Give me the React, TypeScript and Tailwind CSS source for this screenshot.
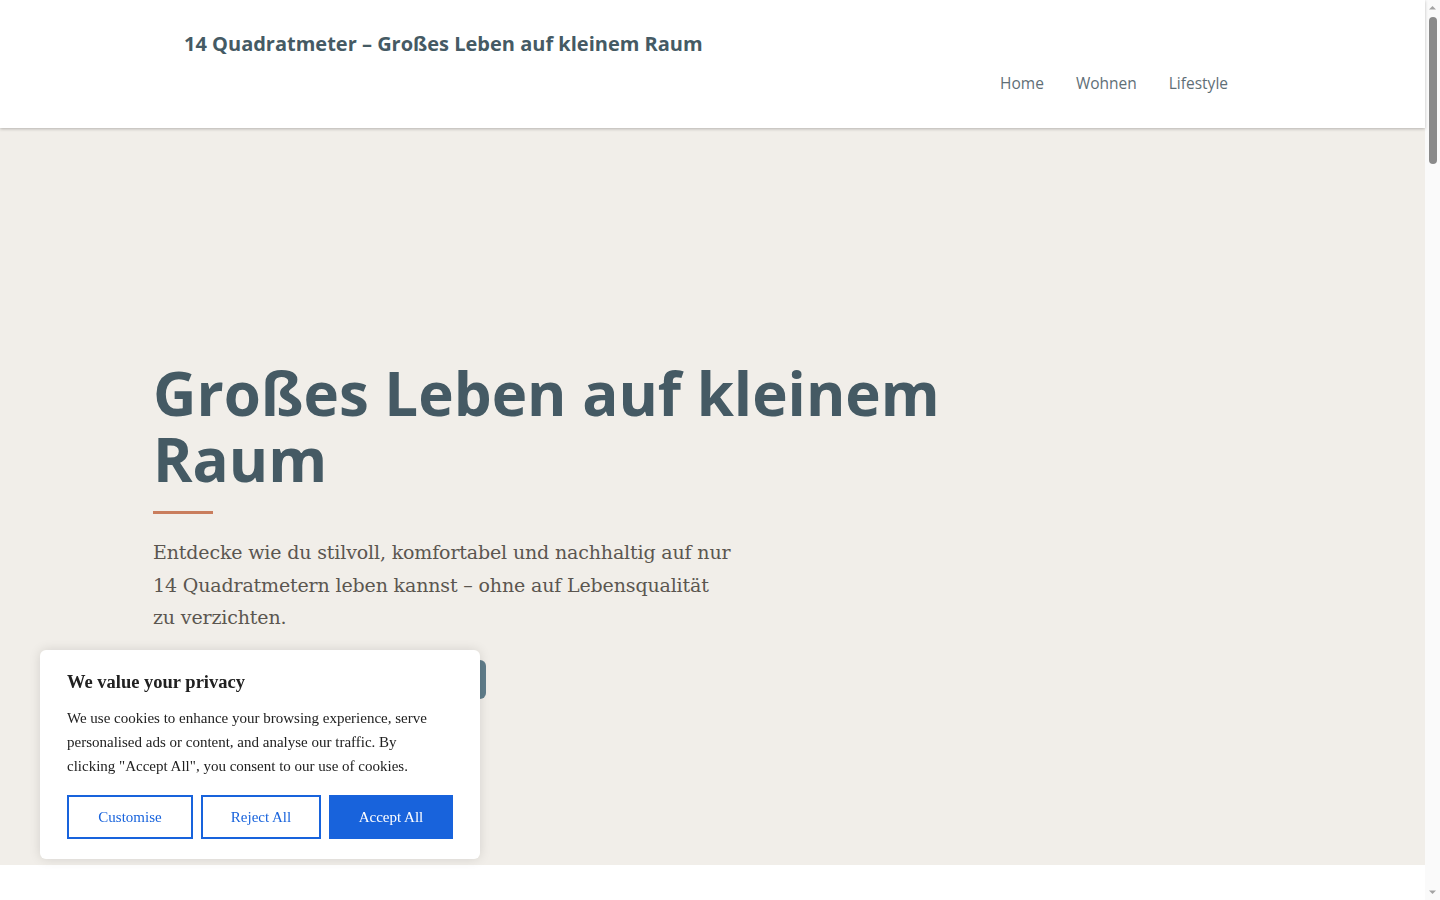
import { useState } from 'react'

const sans = '[font-family:"Open_Sans","Noto_Sans",sans-serif]'
const serif = '[font-family:"DejaVu_Serif","Liberation_Serif",serif]'
const bannerSerif = '[font-family:"Liberation_Serif","DejaVu_Serif",serif]'

function Header() {
  return (
    <header className="relative z-10 h-[128px] bg-white shadow-[0_1px_3px_rgba(0,0,0,0.25)]">
      <div className="pl-[184px] pr-[197px] pt-[30px]">
        <a className={`${sans} block text-[20px] font-bold leading-[28px] text-[#455a64]`}>
          14 Quadratmeter – Großes Leben auf kleinem Raum
        </a>
        <nav className={`${sans} mt-[14px] flex justify-end gap-[32px] text-[15.5px] text-[#5f6f77]`}>
          <a>Home</a>
          <a>Wohnen</a>
          <a>Lifestyle</a>
        </nav>
      </div>
    </header>
  )
}

function Hero() {
  return (
    <section className="h-[737px] bg-[#f1eee9] pl-[153px] pt-[232px]">
      <h1 className={`${sans} text-[60px] font-bold leading-[66px] text-[#455a64]`}>
        <span className="block">Großes Leben auf kleinem</span>
        <span className="block">Raum</span>
      </h1>
      <div className="mt-[19px] h-[3px] w-[60px] bg-[#c97d5d]" />
      <p className={`${serif} mt-[22px] text-[19px] leading-[32.5px] tracking-[-0.15px] text-[#5b5650]`}>
        Entdecke wie du stilvoll, komfortabel und nachhaltig auf nur
        <br />
        14 Quadratmetern leben kannst – ohne auf Lebensqualität
        <br />
        zu verzichten.
      </p>
      <button className={`${sans} mt-[26px] h-[39px] w-[333px] rounded-[6px] bg-[#607d8b] text-[15px] font-semibold text-white`}>
        Jetzt entdecken
      </button>
    </section>
  )
}

function CookieBanner() {
  const [open, setOpen] = useState(true)
  if (!open) return null
  return (
    <div className={`${bannerSerif} fixed bottom-[41px] left-[40px] z-20 w-[440px] rounded-[6px] bg-white px-[27px] pt-[20px] pb-[20px] shadow-[0_0_12px_rgba(0,0,0,0.12)]`}>
      <p className="text-[18.5px] font-bold leading-[24px] text-[#212121]">We value your privacy</p>
      <p className="mt-[12px] max-w-[372px] text-[15px] leading-[24px] text-[#212121]">
        We use cookies to enhance your browsing experience, serve personalised ads or content, and analyse our traffic. By clicking "Accept All", you consent to our use of cookies.
      </p>
      <div className="mt-[17px] flex gap-[8px]">
        <button onClick={() => setOpen(false)} className="h-[44px] w-[126px] border-2 border-[#1863dc] text-[15px] text-[#1863dc]">Customise</button>
        <button onClick={() => setOpen(false)} className="h-[44px] w-[120px] border-2 border-[#1863dc] text-[15px] text-[#1863dc]">Reject All</button>
        <button onClick={() => setOpen(false)} className="h-[44px] w-[124px] border-2 border-[#1863dc] bg-[#1863dc] text-[15px] text-white">Accept All</button>
      </div>
    </div>
  )
}

// classic window scrollbar strip on the right edge
function Scrollbar() {
  return (
    <aside className="sticky top-0 flex h-screen w-[15px] shrink-0 flex-col items-center bg-[#fafafa]">
      <svg width="15" height="15" viewBox="0 0 15 15"><path d="M4 9.5 7.5 6 11 9.5Z" fill="#a3a3a3" /></svg>
      <div className="mt-[2px] h-[147px] w-[8px] rounded-full bg-[#8a8a8a]" />
      <div className="flex-1" />
      <svg width="15" height="15" viewBox="0 0 15 15"><path d="M4 5.5 7.5 9 11 5.5Z" fill="#a3a3a3" /></svg>
    </aside>
  )
}

export default function App() {
  return (
    <div className="flex items-start bg-white">
      <main className="min-w-0 flex-1">
        <Header />
        <Hero />
        <section className="h-[4400px] bg-white" />
      </main>
      <Scrollbar />
      <CookieBanner />
    </div>
  )
}
